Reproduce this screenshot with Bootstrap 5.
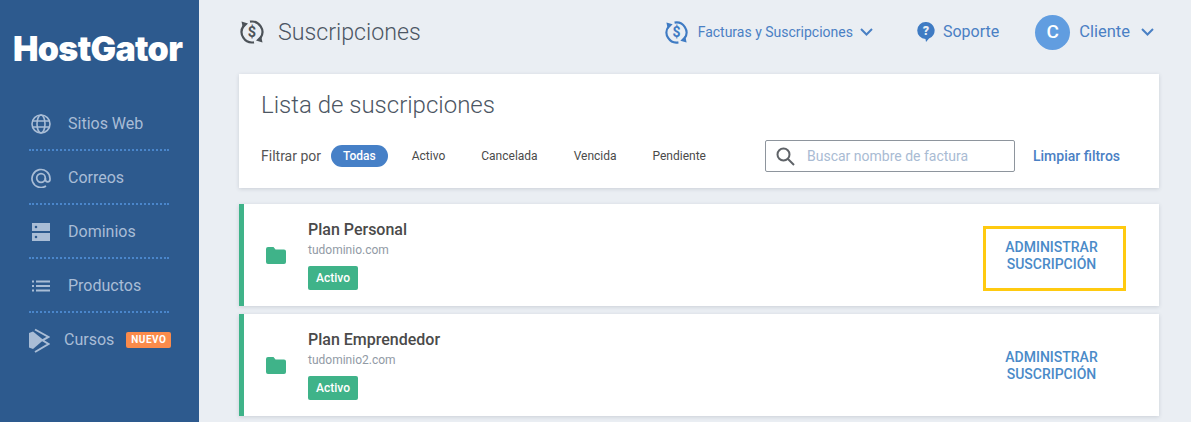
<!DOCTYPE html>
<html lang="es">
<head>
<meta charset="utf-8">
<title>Suscripciones</title>
<link href="https://cdn.jsdelivr.net/npm/bootstrap@5.3.0/dist/css/bootstrap.min.css" rel="stylesheet">
<style>
html,body{height:422px;overflow:hidden}
body{font-family:Roboto,"Liberation Sans",sans-serif;background:#eaeef3;color:#4a4a4a}
.app{height:422px}
.side{width:199px;flex:none;background:#2d5a8e;height:422px}
.logo{font-family:Inter,"Liberation Sans",sans-serif;font-weight:900;font-size:34px;line-height:36px;color:#fff;letter-spacing:-.7px;padding:31px 0 0 13px;height:87px;white-space:nowrap}
.snav{padding:10px 30px 0 29px;box-sizing:content-box;width:140px}
.sitem{height:54px;padding-top:2px;display:flex;align-items:center;color:#a9bdd6;font-size:16px;border-bottom:2px dotted #4a86cb;padding-left:2px}
.sitem svg{width:20px;height:20px;flex:none;margin-right:17px}
.sitem.last{height:54px;padding-top:0;border-bottom:0;padding-left:0;white-space:nowrap}
.sitem.last svg{width:21px;height:25px;margin-right:14px}
.tagnew{background:#fb8b4b;color:#fff;font-size:10px;font-weight:700;border-radius:2px;padding:0 5px;line-height:16px;margin-left:12px;letter-spacing:.5px}
.mainc{width:920px;margin-left:40px;flex:none}
.topb{height:66px;padding-bottom:2px}
.ttl{font-size:23.2px;font-weight:300;color:#4c5663;margin-left:13px;line-height:28px}
.tlink{color:#4a80c4;font-size:16px;white-space:nowrap}
.tlink.sm{font-size:14px}
.tlink.cli{font-size:16.500px;margin-left:9px}
.ava{width:35px;height:35px;border-radius:50%;background:#619de0;color:#fff;font-size:19px;font-weight:500;display:flex;align-items:center;justify-content:center}
.panel{background:#fff;box-shadow:0 1px 4px rgba(40,50,70,.16)}
.head-panel{height:114px;padding:17px 22px 0;margin-top:8px}
.htitle{font-size:24px;font-weight:300;line-height:29px;color:#4c5663;margin:0 0 20px}
.flab{font-size:14px;color:#555;margin-right:10px}
.pillb{font-size:12px;color:#4a4a4a;padding:0 12px;line-height:22px;margin-right:12px;background:none;border:0;border-radius:11px}
.pillb.on{background:#4680c7;color:#fff;font-weight:500}
.sbox{width:250px;height:32px;border:1px solid #8e959d;border-radius:2px;padding-left:10px;margin-left:35px;color:#a9bbd3;font-size:14px}
.sbox input{border:0;outline:0;background:none;font-size:14px;width:200px;margin-left:12px;padding:0;font-family:inherit}
.sbox input::placeholder{color:#a9bbd3;opacity:1}
.clearl{font-size:14px;font-weight:500;color:#4a80c4;margin-left:18px;text-decoration:none}
.subrow{height:102px;border-left:5px solid #3fb389;margin-top:16px}
.subrow+.subrow{margin-top:8px}
.fold{margin-left:22px;width:20px;flex:none}
.subinf{margin-left:22px}
.pname{font-size:16px;font-weight:500;color:#4a4a4a;line-height:20px;margin-top:16px}
.pdom{font-size:12px;color:#919aa5;line-height:18px;margin-top:1px}
.tagok{display:inline-block;background:#3fb389;color:#fff;font-size:12px;font-weight:500;line-height:24px;padding:0 8px;border-radius:2px;margin-top:7px;vertical-align:top}
.admin{width:143px;height:65px;margin-right:33px;margin-top:7px;padding:0 6px 5px 0;border:3px solid transparent;color:#4a8ac8;font-size:14px;font-weight:500;line-height:17px;text-align:center;display:flex;align-items:center;justify-content:center;text-decoration:none}
.admin.mark-on{border-color:#ffca10}
</style>
</head>
<body>
<div class="app d-flex">
  <aside class="side">
    <div class="logo">HostGator</div>
    <nav class="snav">
      <div class="sitem"><svg viewBox="0 0 20 20" fill="none" stroke="#a9bdd6" stroke-width="1.6"><circle cx="10" cy="10" r="9"/><ellipse cx="10" cy="10" rx="4" ry="9"/><path d="M1.500 7h17M1.500 13h17"/></svg>Sitios Web</div>
      <div class="sitem"><svg viewBox="0 0 20 20" fill="none" stroke="#a9bdd6" stroke-width="1.7"><path d="M15 18a9 9 0 1 1 4-7.500v1a2.300 2.300 0 0 1-4.600 0V10"/><circle cx="10" cy="10" r="4.300"/></svg>Correos</div>
      <div class="sitem"><svg viewBox="0 0 20 20"><path fill="#a9bdd6" fill-rule="evenodd" d="M1 1h18v8H1zM1 11h18v8H1zM5 3.700a1.300 1.300 0 1 0 0 2.600 1.300 1.300 0 0 0 0-2.600zM5 13.700a1.300 1.300 0 1 0 0 2.600 1.300 1.300 0 0 0 0-2.600z"/></svg>Dominios</div>
      <div class="sitem"><svg viewBox="0 0 20 20" fill="#a9bdd6"><path d="M1 4.500h2v2H1zM5 4.500h14v2H5zM1 9h2v2H1zM5 9h14v2H5zM1 13.500h2v2H1zM5 13.500h14v2H5z"/></svg>Productos</div>
      <div class="sitem last"><svg viewBox="0 0 21 25"><path fill="#a9bdd6" d="M0 5l4-1.500 10.500 8.500L4 21 0 19.500z"/><path fill="none" stroke="#a9bdd6" stroke-width="2" d="M6 1.500l13.500 7.500-6 3.300 6 3.700-13.500 8"/></svg>Cursos<span class="tagnew">NUEVO</span></div>
    </nav>
  </aside>
  <main class="mainc">
    <header class="topb d-flex align-items-center">
      <svg width="26" height="26" viewBox="0 0 26 26" fill="none" stroke="#4c5258" stroke-width="2.200"><path d="M11 2.700a10.500 10.500 0 0 1 10.500 16.300M15 23.300A10.500 10.500 0 0 1 4.500 7"/><path fill="#4c5258" stroke="none" d="M2.500 2.500l6.500 2-5 5zM23.500 23.500l-6.500-2 5-5z"/><text x="13" y="18" text-anchor="middle" font-size="14.500" font-weight="700" fill="#4c5258" stroke="none" font-family="Roboto">$</text></svg>
      <div class="ttl">Suscripciones</div>
      <div class="d-flex align-items-center ms-auto">
        <svg width="25" height="25" viewBox="0 0 26 26" fill="none" stroke="#3f7bc3" stroke-width="2.200"><path d="M11 2.700a10.500 10.500 0 0 1 10.500 16.300M15 23.300A10.500 10.500 0 0 1 4.500 7"/><path fill="#3f7bc3" stroke="none" d="M2.500 2.500l6.500 2-5 5zM23.500 23.500l-6.500-2 5-5z"/><text x="13" y="18" text-anchor="middle" font-size="14.500" font-weight="700" fill="#3f7bc3" stroke="none" font-family="Roboto">$</text></svg>
        <span class="tlink sm" style="margin-left:9px">Facturas y Suscripciones</span>
        <svg style="margin-left:7px" width="13" height="8" viewBox="0 0 13 8" fill="none" stroke="#4a80c4" stroke-width="2"><path d="M1 1l5.500 5.500L12 1"/></svg>
        <svg style="margin-left:44px" width="18" height="20" viewBox="0 0 18 20"><path fill="#3f7bc3" d="M9 0a8.500 8.500 0 0 1 3 16.500L9 20l-.5-3A8.500 8.500 0 0 1 9 0z"/><text x="9" y="13" text-anchor="middle" font-size="12.500" font-weight="900" fill="#eaeef3" font-family="Roboto">?</text></svg>
        <span class="tlink" style="margin-left:8px">Soporte</span>
        <div class="ava" style="margin-left:36px">C</div>
        <span class="tlink cli">Cliente</span>
        <svg style="margin-left:11px;margin-right:5px" width="13" height="8" viewBox="0 0 13 8" fill="none" stroke="#4a80c4" stroke-width="2"><path d="M1 1l5.500 5.500L12 1"/></svg>
      </div>
    </header>
    <section class="panel head-panel">
      <h1 class="htitle">Lista de suscripciones</h1>
      <div class="d-flex align-items-center">
        <span class="flab">Filtrar por</span>
        <button class="pillb on">Todas</button>
        <button class="pillb">Activo</button>
        <button class="pillb">Cancelada</button>
        <button class="pillb">Vencida</button>
        <button class="pillb">Pendiente</button>
        <label class="sbox d-flex align-items-center">
          <svg width="19" height="19" viewBox="0 0 19 19" fill="none" stroke="#5f6368" stroke-width="2"><circle cx="7.500" cy="7.500" r="6"/><path d="M12 12l6 6"/></svg>
          <input type="text" placeholder="Buscar nombre de factura">
        </label>
        <a class="clearl" href="#">Limpiar filtros</a>
      </div>
    </section>
    <section class="panel subrow d-flex align-items-center">
      <svg class="fold" width="20" height="17" viewBox="0 0 20 17"><path fill="#3fb389" d="M2 0h5.500l2 2.500H18a2 2 0 0 1 2 2V15a2 2 0 0 1-2 2H2a2 2 0 0 1-2-2V2a2 2 0 0 1 2-2z"/></svg>
      <div class="subinf align-self-start">
        <div class="pname">Plan Personal</div>
        <div class="pdom">tudominio.com</div>
        <span class="tagok">Activo</span>
      </div>
      <a class="admin mark-on ms-auto" href="#">ADMINISTRAR<br>SUSCRIPCIÓN</a>
    </section>
    <section class="panel subrow d-flex align-items-center">
      <svg class="fold" width="20" height="17" viewBox="0 0 20 17"><path fill="#3fb389" d="M2 0h5.500l2 2.500H18a2 2 0 0 1 2 2V15a2 2 0 0 1-2 2H2a2 2 0 0 1-2-2V2a2 2 0 0 1 2-2z"/></svg>
      <div class="subinf align-self-start">
        <div class="pname">Plan Emprendedor</div>
        <div class="pdom">tudominio2.com</div>
        <span class="tagok">Activo</span>
      </div>
      <a class="admin ms-auto" href="#">ADMINISTRAR<br>SUSCRIPCIÓN</a>
    </section>
  </main>
</div>
<script src="https://cdn.jsdelivr.net/npm/bootstrap@5.3.0/dist/js/bootstrap.bundle.min.js"></script>
</body>
</html>
